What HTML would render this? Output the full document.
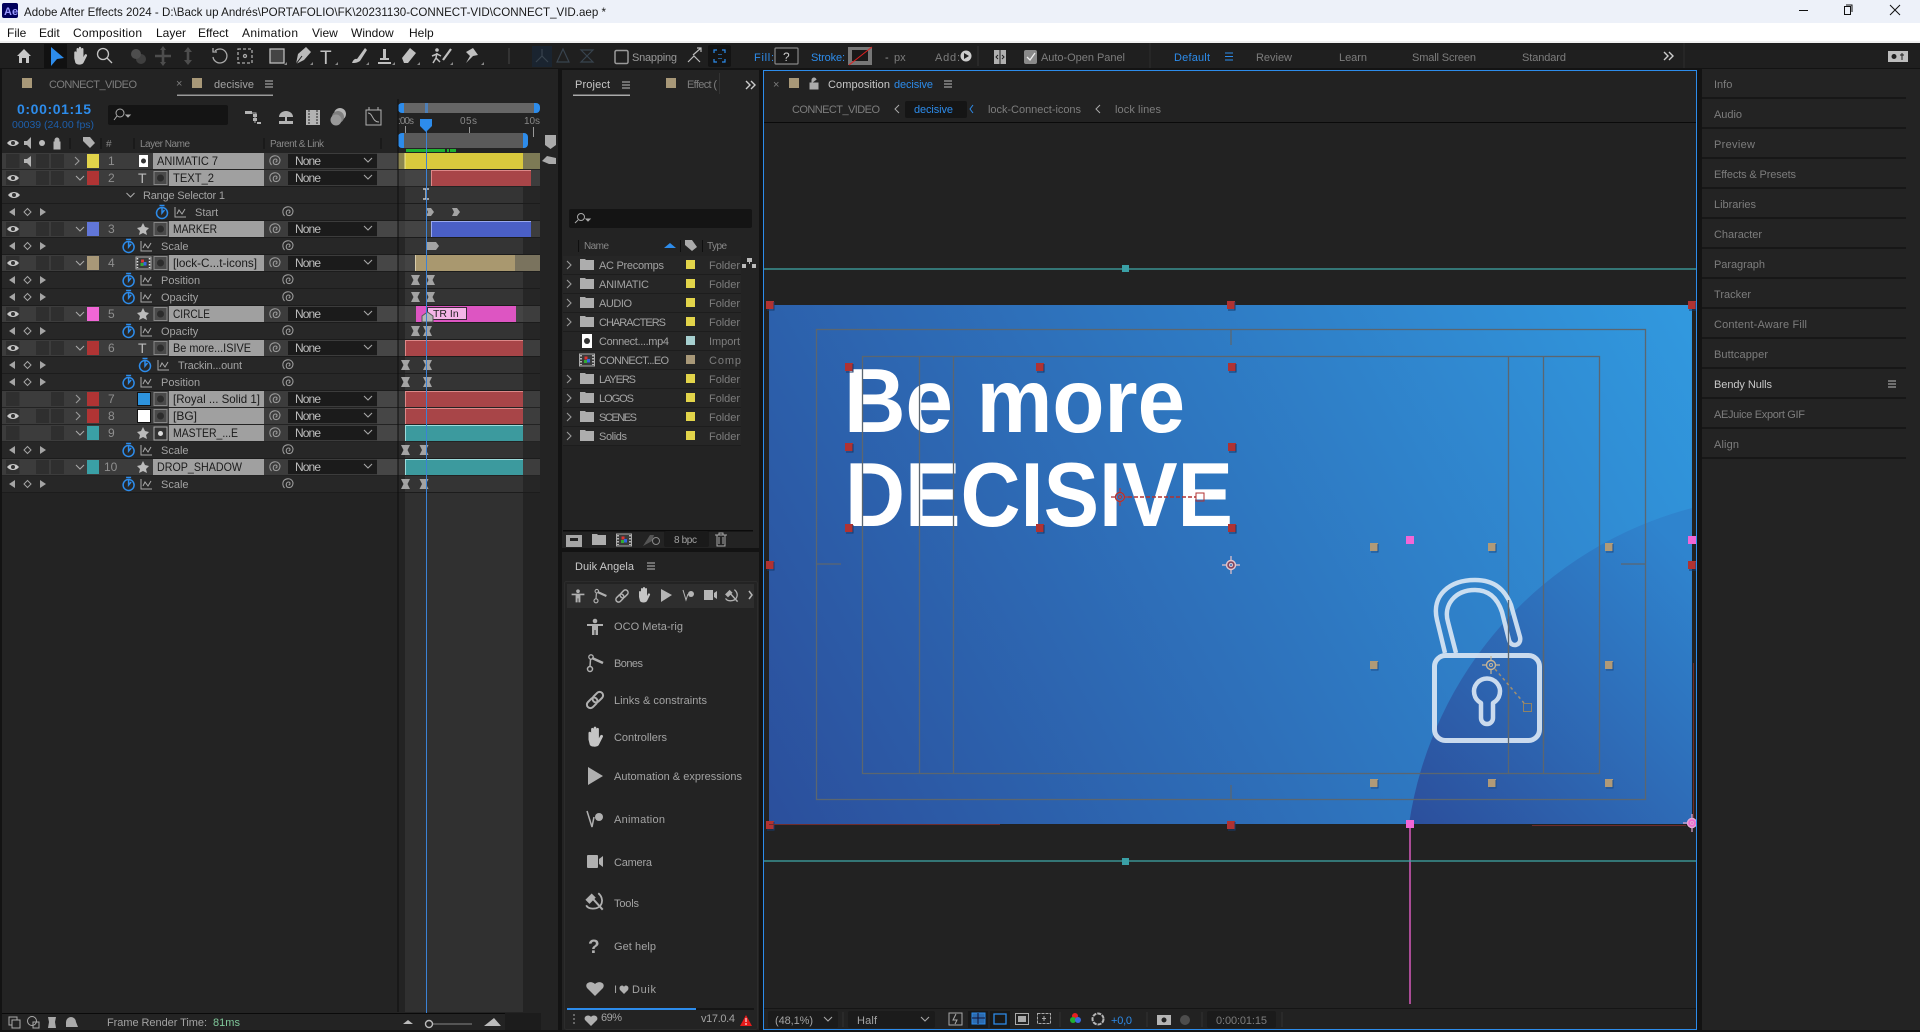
<!DOCTYPE html>
<html lang="en"><head><meta charset="utf-8"><title>Adobe After Effects 2024</title>
<style>
html,body{margin:0;padding:0;background:#131313;overflow:hidden;width:1920px;height:1032px}
svg{display:block}
text{font-family:"Liberation Sans",sans-serif;font-size:11px;fill:#999;white-space:pre}
.d{fill:#7d7d7d}.b{fill:#2d8ceb}.l{fill:#c8c8c8}.n{fill:#1b1b1b;font-size:12px}.w{fill:#bdbdbd;font-size:12px}
.m{fill:#1a1a1a;font-size:12px}.s{fill:#8f8f8f;font-size:12px}.h{font-size:10px;fill:#888}.p{fill:#a3a3a3;font-size:11px}
</style></head><body>
<svg xmlns="http://www.w3.org/2000/svg" width="1920" height="1032" viewBox="0 0 1920 1032">
<defs>
<linearGradient id="bg" gradientUnits="userSpaceOnUse" x1="769" y1="824" x2="1692" y2="305"><stop offset="0" stop-color="#2b4f9c"/><stop offset="1" stop-color="#3199df"/></linearGradient>
<linearGradient id="cg" gradientUnits="userSpaceOnUse" x1="1410" y1="824" x2="1692" y2="560"><stop offset="0" stop-color="#2c4f9c"/><stop offset="1" stop-color="#2f84ce"/></linearGradient>
<g id="eye"><path d="M-6 0C-3-4 3-4 6 0C3 4-3 4-6 0Z" fill="#c8c8c8"/><circle r="2" fill="#333"/></g>
<path id="pw" d="M0 1C2 1 2-2 0-2C-3-2-3 3 0 3.500C4 4 6-1 3-4C1-6-3-5.500-5-3M-5-3C-6-1-6 2-4 4" fill="none" stroke="#9a9a9a" stroke-width="1.100"/>
<g id="sw" fill="none" stroke="#2d8ceb" stroke-width="1.500"><circle cy="1" r="5.500"/><path d="M-2.500-6.500H2.500M0-4.500V1L2.500-2"/></g>
<path id="gr" d="M0-5V5H11M2 2L4-2L7 2L10-3" fill="none" stroke="#a8a8a8" stroke-width="1"/>
<g id="nav" fill="#a5a5a5"><path d="M15-4V4L9 0Z"/><path d="M27.500-3.500L31 0L27.500 3.500L24 0Z" fill="none" stroke="#a5a5a5"/><path d="M40-4L46 0L40 4Z"/></g>
<path id="kf" d="M-4.500-5H4.500L2 0L4.500 5H-4.500L-2 0Z" fill="#a3a3a3"/>
<g id="sq"><rect x="-6.500" y="-6.500" width="13" height="13" fill="#4a4a4a" stroke="#888"/><circle r="3.500" fill="#2c2c2c"/></g>
<g id="cmp"><rect x="-7.500" y="-6" width="15" height="12" fill="#3a3a3a" stroke="#aaa"/><path d="M-6-5V5M6-5V5" stroke="#ddd" stroke-dasharray="1.500 1.500" stroke-width="1.500"/><rect x="-2.500" y="-3.500" width="3" height="3" fill="#d33"/><rect x="-3" y="0" width="3" height="3" fill="#3a3"/><rect x="0" y="-1" width="3" height="3.500" fill="#36d"/></g>
<path id="cd" d="M-4-2L0 2L4-2" fill="none" stroke="#a8a8a8" stroke-width="1.100"/>
<path id="cr" d="M-2-4L2 0L-2 4" fill="none" stroke="#9a9a9a" stroke-width="1.100"/>
<path id="bu" d="M-4-3H4M-4 0H4M-4 3H4" stroke="#bdbdbd" stroke-width="1"/>
<path id="fo" d="M-7-5H-2L-1-4H7V6H-7Z" fill="#adadad"/>
<path id="ha" d="M-5 2V-3a1 1 0 0 1 2 0V-1V-6a1 1 0 0 1 2 0V-1V-7a1 1 0 0 1 2 0V-1V-6a1 1 0 0 1 2 0V1L4-1a1 1 0 0 1 2 1L3 6C2 8-3 8-4 6Z" fill="#c4c4c4"/>
<g id="oco" fill="#b0b0b0"><circle cy="-6" r="2.300"/><path d="M-8-3H8V-1H3V8H.5V3H-.5V8H-3V-1H-8Z"/></g>
<g id="bone" fill="none" stroke="#b0b0b0"><circle cx="-5" cy="6" r="2.500" stroke-width="1.500"/><circle cx="-4" cy="-6" r="2.200" stroke-width="1.300"/><path d="M-3-5L8 0" stroke-width="2.600"/><path d="M-4.500-3.500L-5 3.500" stroke-width="1.500"/></g>
<g id="lk" fill="none" stroke="#b0b0b0" stroke-width="2" transform="rotate(-45)"><rect x="-10" y="-3.500" width="12" height="7" rx="3.500"/><rect x="-2" y="-3.500" width="12" height="7" rx="3.500"/></g>
<g id="tl" fill="none" stroke="#b0b0b0"><path d="M-8-2L-3-7L0-4L-5 1Z" fill="#b0b0b0"/><path d="M-2-3L7 7" stroke-width="1.800"/><path d="M3-8C9-3 7 6-2 6C-5 6-7 5-8 3" stroke-width="1.600"/></g>
<g id="L"><rect x="2" width="396" height="16" fill="#3c3c3c"/><rect x="6" y="1" width="13.500" height="14" fill="#2f2f2f"/><rect x="36" y="1" width="13" height="14" fill="#2f2f2f"/><rect x="51" y="1" width="13" height="14" fill="#2f2f2f"/><rect x="377" width="21" height="16" fill="#464646"/><rect x="169" width="95" height="16" fill="#a0a0a0"/><use href="#pw" x="275.500" y="8"/><rect x="288" y="1" width="89" height="14" fill="#1b1b1b"/><text x="295" y="12" class="w" textLength="26">None</text><use href="#cd" x="368" y="7"/><rect x="398" width="142" height="16" fill="#3d3d3d"/><rect x="405" width="118" height="16" fill="#444"/></g>
<g id="S0"><rect x="2" width="396" height="16" fill="#272727"/><rect x="398" width="142" height="16" fill="#262626"/><rect x="405" width="118" height="16" fill="#343434"/></g>
<g id="S"><use href="#S0"/><use href="#pw" x="288.500" y="8"/></g>
<g id="h8"><rect x="-4" y="-4" width="8" height="8" fill="#b03232"/><path d="M4-3V5H-3" fill="none" stroke="#173a6c" stroke-width="1"/></g>
<g id="ht"><rect x="-4" y="-4" width="8" height="8" fill="#b09a78"/><path d="M4-3V5H-3" fill="none" stroke="#1d4f8c" stroke-width="1"/></g>
<g id="hp"><rect x="-4" y="-4" width="8" height="8" fill="#f266d6"/></g>
<g id="ap" fill="none"><circle r="4.500" stroke-width="1.400"/><circle r="1.500" stroke-width="1"/><path d="M-9 0H-4.500M4.500 0H9M0-9V-4.500M0 4.500V9" stroke-width="1.200"/></g>
</defs>

<!-- window chrome -->
<rect width="1920" height="23" fill="#edf1f9"/>
<rect y="23" width="1920" height="18" fill="#fff"/>
<rect y="41" width="1920" height="2" fill="#f0f0f0"/>
<rect x="2" y="3" width="16" height="15" rx="2" fill="#00005b"/>
<text x="4" y="15" style="font-size:11px;font-weight:bold;fill:#9999ff">Ae</text>
<text x="24" y="16" style="font-size:12px;fill:#1a1a1a" textLength="582" lengthAdjust="spacingAndGlyphs">Adobe After Effects 2024 - D:\Back up Andrés\PORTAFOLIO\FK\20231130-CONNECT-VID\CONNECT_VID.aep *</text>
<text x="7" y="37" style="font-size:12px;fill:#111">File</text><text x="39" y="37" style="font-size:12px;fill:#111">Edit</text><text x="73" y="37" style="font-size:12px;fill:#111" textLength="69">Composition</text><text x="156" y="37" style="font-size:12px;fill:#111">Layer</text><text x="198" y="37" style="font-size:12px;fill:#111">Effect</text><text x="242" y="37" style="font-size:12px;fill:#111" textLength="56">Animation</text><text x="312" y="37" style="font-size:12px;fill:#111">View</text><text x="351" y="37" style="font-size:12px;fill:#111">Window</text><text x="409" y="37" style="font-size:12px;fill:#111">Help</text>
<path d="M1799 10.500H1808" stroke="#111"/><rect x="1844.500" y="6.500" width="6" height="8" fill="none" stroke="#111"/><path d="M1846 5H1852V12" fill="none" stroke="#111"/><path d="M1890 5L1900 15M1900 5L1890 15" stroke="#111"/>

<!-- toolbar -->
<rect y="43" width="1920" height="25" fill="#1f1f1f"/>
<path d="M17 56L24 49L31 56H29V63H26V58H22V63H19V56Z" fill="#c8c8c8"/>
<rect x="44" y="44" width="23" height="24" fill="#111"/>
<path d="M51 47L64 58L57 59L51 66Z" fill="#2d8ceb"/>
<use href="#ha" transform="translate(80,56) scale(1.150)"/>
<g fill="none" stroke="#c4c4c4" stroke-width="1.300"><circle cx="103" cy="54" r="5.500"/><path d="M107 58L112 63"/></g>
<g fill="#4d4d4d"><circle cx="136" cy="54" r="5"/><circle cx="141" cy="59" r="5" opacity=".7"/></g>
<path d="M163 48V64M155 56H171" stroke="#4d4d4d" stroke-width="2.600"/><path d="M163 46L166 50H160ZM163 66L166 62H160Z" fill="#4d4d4d"/>
<path d="M188 50V62" stroke="#4d4d4d" stroke-width="2.600"/><path d="M188 47L192 52H184ZM188 65L192 60H184Z" fill="#4d4d4d"/>
<g fill="none" stroke="#aaa" stroke-width="1.300"><path d="M215 51A7 7 0 1 1 213 57"/><path d="M213 48V52H217"/><rect x="238" y="49" width="14" height="14" stroke-dasharray="3 2"/><circle cx="245" cy="56" r="1.500"/><rect x="270" y="49" width="14" height="14" fill="#444" stroke="#bbb"/></g>
<path d="M296 64L298 54L306 47L311 52L304 60Z" fill="#bbb"/><path d="M296 64L302 56" stroke="#1f1f1f"/>
<text x="320" y="64" style="font-size:19px;fill:#c0c0c0">T</text>
<path d="M352 63C354 58 356 59 357 59L365 48L367 50L360 61C357 63 355 63 352 63Z" fill="#c0c0c0"/>
<path d="M378 62H391V64H378ZM380 58H389V60H380ZM383 49H386V58H383Z" fill="#c0c0c0"/>
<path d="M402 58L410 48L416 53L408 63H404Z" fill="#c0c0c0"/>
<circle cx="437" cy="50" r="1.800" fill="#c0c0c0"/><path d="M437 53L436 58L433 63M436 58L440 62M432 56L437 54L441 56" fill="none" stroke="#c0c0c0" stroke-width="1.500"/><path d="M443 60L451 49" stroke="#c0c0c0" stroke-width="2.200"/>
<path d="M466 63L470 56L466 52L473 48L478 55L473 56Z" fill="#c0c0c0"/>
<path d="M284 65L287 62V65ZM310 65L313 62V65ZM335 65L338 62V65ZM366 65L369 62V65ZM392 65L395 62V65ZM417 65L420 62V65ZM450 65L453 62V65ZM481 65L484 62V65Z" fill="#888"/>
<rect x="532" y="46" width="20" height="21" fill="#1a2430"/>
<g fill="none" stroke="#38434e" stroke-width="1.200"><path d="M542 49V56L536 62M542 56L548 62"/><path d="M563 49L557 62H569Z"/><path d="M581 50H593L581 62H593Z"/></g>
<path d="M509 48V64" stroke="#333" stroke-width="2"/>
<rect x="615" y="50.500" width="13" height="13" rx="1.500" fill="none" stroke="#9a9a9a" stroke-width="1.500"/>
<text x="632" y="61" textLength="45">Snapping</text>
<path d="M688 62L694 56L700 62M693 55L701 48M697 48H701V52" fill="none" stroke="#bbb" stroke-width="1.200"/>
<rect x="708" y="45" width="23" height="22" rx="2" fill="#131313"/>
<g fill="none" stroke="#2d8ceb" stroke-width="1.200"><path d="M714 53V50H717M722 50H725V53M725 59V62H722M717 62H714V59"/><path d="M719 54V55M721 54V55M719 58V59M721 58V59"/></g>
<text x="754" y="61" class="b" textLength="20">Fill:</text>
<rect x="775" y="48" width="23" height="16" rx="1" fill="#1a1a1a" stroke="#888" stroke-width="1.200"/>
<text x="783" y="61" style="font-size:12px;fill:#ccc">?</text>
<text x="811" y="61" class="b" textLength="34">Stroke:</text>
<rect x="848" y="47" width="24" height="18" fill="#777"/><rect x="852" y="50" width="16" height="11" fill="#191919"/><path d="M849 65L872 47" stroke="#e02020"/>
<text x="885" y="61">-</text><text x="894" y="61" class="d">px</text>
<text x="935" y="61" class="d" textLength="25">Add:</text>
<circle cx="966" cy="56" r="5.500" fill="#ccc"/><path d="M964 53V59L969 56Z" fill="#1f1f1f"/>
<path d="M978 46V66" stroke="#333"/>
<rect x="994" y="50" width="12" height="14" fill="#b0b0b0"/><path d="M1000 50V64M998 55L996 57L998 59M1002 55L1004 57L1002 59" stroke="#1f1f1f" fill="none"/>
<rect x="1024" y="50" width="13" height="14" rx="2" fill="#8a8a8a"/><path d="M1027 57L1030 60L1035 53" fill="none" stroke="#eee" stroke-width="1.300"/>
<text x="1041" y="61" class="d" textLength="84">Auto-Open Panel</text>
<path d="M1150 43V68" stroke="#2c2c2c"/>
<text x="1174" y="61" class="b" textLength="36">Default</text>
<path d="M1225 53H1233M1225 56.500H1233M1225 60H1233" stroke="#2d8ceb"/>
<text x="1256" y="61" class="d" textLength="36">Review</text><text x="1339" y="61" class="d" textLength="28">Learn</text><text x="1412" y="61" class="d" textLength="64">Small Screen</text><text x="1522" y="61" class="d" textLength="44">Standard</text>
<path d="M1664 52L1668 56L1664 60M1669 52L1673 56L1669 60" fill="none" stroke="#ccc" stroke-width="1.400"/>
<path d="M1684 43V68" stroke="#2c2c2c"/>
<rect x="1888" y="51" width="20" height="11" fill="#bdbdbd"/><circle cx="1894" cy="56.500" r="2.500" fill="#1f1f1f"/><path d="M1902 53V60M1900 55H1904" stroke="#1f1f1f"/>

<!-- timeline panel -->
<rect x="2" y="69" width="556" height="961" fill="#232323"/>
<rect x="22" y="78" width="10" height="10" fill="#a89878"/>
<text x="49" y="88" class="d" textLength="88">CONNECT_VIDEO</text>
<text x="176" y="87" class="d">×</text>
<rect x="192" y="78" width="10" height="10" fill="#a89878"/>
<text x="214" y="88" class="p" textLength="40">decisive</text><use href="#bu" x="269" y="84"/>
<rect x="177" y="94.500" width="96" height="1.500" fill="#9a9a9a"/>
<text x="17" y="114" style="font-size:14px;font-weight:bold;fill:#2d8ceb" textLength="74">0:00:01:15</text>
<text x="12" y="128" style="font-size:10.500px;fill:#1e5fab" textLength="82">00039 (24.00 fps)</text>
<rect x="108" y="105" width="120" height="20" rx="2" fill="#141414"/>
<circle cx="120" cy="113" r="4" fill="none" stroke="#aaa"/><path d="M117 116L114 120M126 115H130L128 117Z" stroke="#aaa" fill="#aaa"/>
<g fill="#b3b3b3"><path d="M245 111H252V114H245ZM253 114H257V117H253ZM253 118H257V121H253ZM257 122H261V124H257Z"/><path d="M249 113H256V117M255 117V123" fill="none" stroke="#b3b3b3"/><path d="M279 117A7 6 0 0 1 293 117ZM285 117H287V121H285ZM279 121H293V124H279Z"/><path d="M306 110H320V125H306Z"/><circle cx="340" cy="114" r="6"/><circle cx="338" cy="117" r="6" fill="#808080"/><circle cx="336" cy="120" r="5.500" fill="#999"/></g>
<path d="M309 110V125M317 110V125" stroke="#232323" stroke-dasharray="2 1"/>
<rect x="366" y="110" width="15" height="15" fill="none" stroke="#b3b3b3"/><path d="M368 113C373 113 372 122 379 122M369 107V110M378 107V110" fill="none" stroke="#b3b3b3"/>

<!-- column header -->
<use href="#eye" x="13" y="143"/><path d="M24 141H27L31 137V149L27 145H24Z" fill="#b0b0b0"/><circle cx="42" cy="143" r="3" fill="#bbb"/><path d="M54 142H60V149H54ZM55 142V140A2 2 0 0 1 59 140V142" fill="#b5b5b5" stroke="#b5b5b5"/>
<path d="M70 138V149M101 138V149M134 138V149M264 138V149M381 138V149" stroke="#111"/>
<path d="M83 137H90L95 143L90 148L83 141Z" fill="#b0b0b0"/>
<text x="106" y="147" class="h">#</text><text x="140" y="147" class="h" textLength="50">Layer Name</text><text x="270" y="147" class="h" textLength="54">Parent &amp; Link</text>

<!-- layers -->
<use href="#L" y="153"/><rect x="153" y="153" width="18" height="16" fill="#a0a0a0"/><path d="M24 159H27L31 156V167L27 163H24Z" fill="#b5b5b5"/><use href="#cr" x="77" y="161"/><rect x="87" y="154" width="12" height="14" fill="#e2d44a"/><text x="108" y="165" class="s">1</text><rect x="139" y="155" width="9" height="12" fill="#fff"/><circle cx="143.500" cy="161" r="2.500" fill="#333"/><text x="157" y="165" class="m" textLength="61" lengthAdjust="spacingAndGlyphs">ANIMATIC 7</text>
<use href="#L" y="170"/><use href="#eye" x="13" y="178"/><use href="#cd" x="80" y="178"/><rect x="87" y="171" width="12" height="14" fill="#b03434"/><text x="108" y="182" class="s">2</text><text x="138" y="183" style="font-size:14px;fill:#bbb">T</text><use href="#sq" x="160.500" y="178"/><text x="173" y="182" class="m" textLength="41" lengthAdjust="spacingAndGlyphs">TEXT_2</text>
<use href="#S0" y="187"/><use href="#eye" x="14" y="195"/><use href="#cd" x="130.500" y="195"/><text x="143" y="199" class="p" textLength="82">Range Selector 1</text>
<use href="#S" y="204"/><use href="#nav" y="212"/><use href="#sw" x="162" y="212"/><use href="#gr" x="175" y="212"/><text x="195" y="216" class="p">Start</text>
<use href="#L" y="221"/><use href="#eye" x="13" y="229"/><use href="#cd" x="80" y="229"/><rect x="87" y="222" width="12" height="14" fill="#6176d8"/><text x="108" y="233" class="s">3</text><path d="M143 223L145 227L149 228L146 231L147 235L143 233L139 235L140 231L137 228L141 227Z" fill="#bbb"/><use href="#sq" x="160.500" y="229"/><text x="173" y="233" class="m" textLength="44" lengthAdjust="spacingAndGlyphs">MARKER</text>
<use href="#S" y="238"/><use href="#nav" y="246"/><use href="#sw" x="128.600" y="246"/><use href="#gr" x="141" y="246"/><text x="161" y="250" class="p">Scale</text>
<use href="#L" y="255"/><use href="#eye" x="13" y="263"/><use href="#cd" x="80" y="263"/><rect x="87" y="256" width="12" height="14" fill="#a89878"/><text x="108" y="267" class="s">4</text><use href="#cmp" x="143.500" y="263"/><use href="#sq" x="160.500" y="263"/><text x="173" y="267" class="m" textLength="84" lengthAdjust="spacingAndGlyphs">[lock-C...t-icons]</text>
<use href="#S" y="272"/><use href="#nav" y="280"/><use href="#sw" x="128.600" y="280"/><use href="#gr" x="141" y="280"/><text x="161" y="284" class="p">Position</text>
<use href="#S" y="289"/><use href="#nav" y="297"/><use href="#sw" x="128.600" y="297"/><use href="#gr" x="141" y="297"/><text x="161" y="301" class="p">Opacity</text>
<use href="#L" y="306"/><use href="#eye" x="13" y="314"/><use href="#cd" x="80" y="314"/><rect x="87" y="307" width="12" height="14" fill="#f266d6"/><text x="108" y="318" class="s">5</text><path d="M143 308L145 312L149 313L146 316L147 320L143 318L139 320L140 316L137 313L141 312Z" fill="#bbb"/><use href="#sq" x="160.500" y="314"/><text x="173" y="318" class="m" textLength="37" lengthAdjust="spacingAndGlyphs">CIRCLE</text>
<use href="#S" y="323"/><use href="#nav" y="331"/><use href="#sw" x="128.600" y="331"/><use href="#gr" x="141" y="331"/><text x="161" y="335" class="p">Opacity</text>
<use href="#L" y="340"/><use href="#eye" x="13" y="348"/><use href="#cd" x="80" y="348"/><rect x="87" y="341" width="12" height="14" fill="#b03434"/><text x="108" y="352" class="s">6</text><text x="138" y="353" style="font-size:14px;fill:#bbb">T</text><use href="#sq" x="160.500" y="348"/><text x="173" y="352" class="m" textLength="78" lengthAdjust="spacingAndGlyphs">Be more...ISIVE</text>
<use href="#S" y="357"/><use href="#nav" y="365"/><use href="#sw" x="145" y="365"/><use href="#gr" x="158" y="365"/><text x="178" y="369" class="p" textLength="64">Trackin...ount</text>
<use href="#S" y="374"/><use href="#nav" y="382"/><use href="#sw" x="128.600" y="382"/><use href="#gr" x="141" y="382"/><text x="161" y="386" class="p">Position</text>
<use href="#L" y="391"/><rect x="36" y="392" width="13" height="14" fill="#3c3c3c"/><use href="#cr" x="78" y="399"/><rect x="87" y="392" width="12" height="14" fill="#b03434"/><text x="108" y="403" class="s">7</text><rect x="137.500" y="392.500" width="13" height="13" fill="#2d93dd" stroke="#111"/><use href="#sq" x="160.500" y="399"/><text x="173" y="403" class="m" textLength="87" lengthAdjust="spacingAndGlyphs">[Royal ... Solid 1]</text>
<use href="#L" y="408"/><use href="#eye" x="13" y="416"/><use href="#cr" x="78" y="416"/><rect x="87" y="409" width="12" height="14" fill="#b03434"/><text x="108" y="420" class="s">8</text><rect x="137.500" y="409.500" width="13" height="13" fill="#fff" stroke="#111"/><use href="#sq" x="160.500" y="416"/><text x="173" y="420" class="m">[BG]</text>
<use href="#L" y="425"/><rect x="36" y="426" width="13" height="14" fill="#3c3c3c"/><use href="#cd" x="80" y="433"/><rect x="87" y="426" width="12" height="14" fill="#3aa0a6"/><text x="108" y="437" class="s">9</text><path d="M143 427L145 431L149 432L146 435L147 439L143 437L139 439L140 435L137 432L141 431Z" fill="#bbb"/><rect x="154" y="427" width="13" height="13" fill="#333" stroke="#aaa"/><circle cx="160.500" cy="433.500" r="2.500" fill="#ddd"/><text x="173" y="437" class="m" textLength="65" lengthAdjust="spacingAndGlyphs">MASTER_...E</text>
<use href="#S" y="442"/><use href="#nav" y="450"/><use href="#sw" x="128.600" y="450"/><use href="#gr" x="141" y="450"/><text x="161" y="454" class="p">Scale</text>
<use href="#L" y="459"/><rect x="153" y="459" width="20" height="16" fill="#a0a0a0"/><use href="#eye" x="13" y="467"/><use href="#cd" x="80" y="467"/><rect x="87" y="460" width="12" height="14" fill="#3aa0a6"/><text x="104" y="471" class="s">10</text><path d="M143 461L145 465L149 466L146 469L147 473L143 471L139 473L140 469L137 466L141 465Z" fill="#bbb"/><text x="157" y="471" class="m" textLength="85" lengthAdjust="spacingAndGlyphs">DROP_SHADOW</text>
<use href="#S" y="476"/><use href="#nav" y="484"/><use href="#sw" x="128.600" y="484"/><use href="#gr" x="141" y="484"/><text x="161" y="488" class="p">Scale</text>
<path d="M2 186.500H398M2 203.500H540M2 220.500H540M2 254.500H540M2 288.500H540M2 305.500H540M2 339.500H540M2 373.500H540M2 390.500H540M2 458.500H540M2 492.500H540M2 237.500H540M2 271.500H540M2 322.500H540M2 356.500H540" stroke="#1c1c1c"/>

<!-- timeline bars -->
<rect x="405" y="493" width="118" height="519" fill="#303030"/>
<rect x="398" y="153" width="7" height="16" fill="#8a8450"/><rect x="405" y="153" width="118" height="16" fill="#d9c93d"/><rect x="523" y="153" width="17" height="16" fill="#7d7a55"/><path d="M405 153V169" stroke="#f2e990"/>
<rect x="431" y="170" width="100" height="16" fill="#a84548"/><path d="M431.500 170V186M431 170.500H531" stroke="#d88"/>
<rect x="431" y="221" width="100" height="16" fill="#4a5fc6"/><path d="M431.500 221V237M431 221.500H531" stroke="#99a8ee"/>
<rect x="415" y="255" width="100" height="16" fill="#a9986f"/><rect x="515" y="255" width="25" height="16" fill="#7a735e"/><path d="M415.500 255V271" stroke="#d8cbaa"/>
<rect x="416" y="306" width="100" height="16" fill="#dd55c2"/>
<rect x="405" y="340" width="118" height="16" fill="#a84548"/><rect x="405" y="391" width="118" height="16" fill="#a84548"/><rect x="405" y="408" width="118" height="16" fill="#a84548"/>
<rect x="405" y="425" width="118" height="16" fill="#3c9a9e"/><rect x="405" y="459" width="118" height="16" fill="#3c9a9e"/>
<path d="M405.500 340V356M405 340.500H523M405.500 391V407M405 391.500H523M405.500 408V424M405 408.500H523" stroke="#d88"/>
<path d="M405.500 425V441M405 425.500H523M405.500 459V475M405 459.500H523" stroke="#9ddcdc"/>
<rect x="427.500" y="307.500" width="39" height="12" fill="#f5b5e8" stroke="#3a2a38"/><text x="433" y="317" style="font-size:10.500px;fill:#222">TR In</text>
<path d="M422 322V316L427.500 312L433 316V322Z" fill="#b5b5b5" stroke="#555"/>
<path d="M423 189H429M426 189V199M423 199H429" stroke="#c8c8c8" stroke-width="1.400"/>
<path d="M426 208H431L434 212L431 216H426L428 212Z M452 208H457L460 212L457 216H452L454 212Z" fill="#a3a3a3"/>
<path d="M426 242H436L439 246L436 250H426Z" fill="#a3a3a3"/>
<use href="#kf" x="415.500" y="280"/><use href="#kf" x="430.500" y="280"/><use href="#kf" x="415.500" y="297"/><use href="#kf" x="430.500" y="297"/>
<use href="#kf" x="415.500" y="331"/><use href="#kf" x="427.500" y="331"/><use href="#kf" x="405.500" y="365"/><use href="#kf" x="427.500" y="365"/><use href="#kf" x="405.500" y="382"/><use href="#kf" x="427.500" y="382"/><use href="#kf" x="405.500" y="450"/><use href="#kf" x="424" y="450"/><use href="#kf" x="405.500" y="484"/><use href="#kf" x="424" y="484"/>
<rect x="398" y="103" width="142" height="10" rx="4" fill="#2d8ceb"/><rect x="404" y="103" width="130" height="10" fill="#666"/><rect x="425" y="103" width="3" height="10" fill="#4f7fb5"/>
<text x="398" y="124" class="h" textLength="16">:00s</text><text x="460" y="124" class="h" textLength="17">05s</text><text x="524" y="124" class="h" textLength="16">10s</text>
<path d="M405.500 126V133M469.500 127V133M533.500 127V137" stroke="#999"/>
<rect x="398" y="133" width="130" height="15" rx="4" fill="#2d8ceb"/><rect x="404" y="133" width="119" height="15" fill="#5a5a5a"/>
<rect x="406" y="149" width="39" height="3" fill="#1fb030"/><rect x="447" y="149" width="2" height="3" fill="#1fb030"/><rect x="450" y="149" width="6" height="3" fill="#1fb030"/>
<path d="M545 135H556V145L550.500 149L545 145Z" fill="#aaa"/>
<path d="M542 161L547 156L556 158V164H549Z" fill="#aaa"/>
<path d="M398 99V1012" stroke="#0d0d0d" stroke-width="1"/>
<path d="M420 119H432V126L426 132L420 126Z" fill="#2d8ceb"/>
<path d="M426.500 131V1013" stroke="#3b82d6"/>
<!-- timeline footer -->
<rect x="2" y="1013" width="503" height="1" fill="#0a0a0a"/><rect x="505" y="1013" width="36" height="17" fill="#1c1c1c"/>
<g fill="none" stroke="#aaa"><rect x="9" y="1017" width="8" height="8"/><rect x="12" y="1020" width="8" height="8" fill="#232323"/><circle cx="32" cy="1021" r="4.500"/><rect x="33" y="1022" width="6" height="6"/></g>
<path d="M48 1017H56L55 1022L56 1028H48L49 1022Z" fill="#aaa"/><path d="M66 1022A5 5 0 0 1 76 1022L78 1027H66Z" fill="#aaa"/>
<text x="107" y="1026" class="p" textLength="100">Frame Render Time:</text><text x="213" y="1026" style="fill:#7fc89a" textLength="27">81ms</text>
<path d="M403 1024L408 1020L413 1024Z M484 1026L494 1018L501 1026Z" fill="#bbb"/><path d="M429 1024H472" stroke="#555" stroke-width="2"/><circle cx="429" cy="1024" r="3.500" fill="#232323" stroke="#bbb" stroke-width="1.400"/>

<!-- project panel -->
<rect x="562" y="70" width="197" height="478" fill="#232323"/>
<text x="575" y="88" class="l" textLength="35">Project</text><use href="#bu" x="626" y="85"/><rect x="573" y="94.500" width="57" height="1.500" fill="#aaa"/>
<rect x="666" y="78" width="10" height="10" fill="#a89878"/><text x="687" y="88" class="d" textLength="30">Effect (</text><path d="M719.500 73V94" stroke="#333"/>
<path d="M746 81L750 85L746 89M751 81L755 85L751 89" fill="none" stroke="#ccc" stroke-width="1.400"/>
<rect x="569" y="209" width="183" height="19" rx="2" fill="#141414"/>
<circle cx="581" cy="217" r="3.500" fill="none" stroke="#aaa"/><path d="M578 220L575 223M586 219H590L588 221Z" stroke="#aaa" fill="#aaa"/>
<path d="M578.500 240V252M680.500 240V252M702.500 240V252" stroke="#0f0f0f"/>
<text x="584" y="249" class="h" textLength="25">Name</text><path d="M664 248L670 243L676 248Z" fill="#2d8ceb"/><path d="M685 240H692L697 247L692 251L685 245Z" fill="#aaa"/><text x="707" y="249" class="h" textLength="20">Type</text>
<rect x="563" y="256" width="178" height="190" fill="#262626"/>
<path d="M563 274.500H741M563 293.500H741M563 312.500H741M563 331.500H741M563 350.500H741M563 369.500H741M563 388.500H741M563 407.500H741M563 426.500H741M563 445.500H741" stroke="#1d1d1d"/>
<use href="#cr" x="569" y="265"/><use href="#fo" x="587" y="264"/><text x="599" y="269" class="p" textLength="65">AC Precomps</text><rect x="686" y="260" width="9" height="9" fill="#e2d44a"/><text x="709" y="269" class="d" textLength="31">Folder</text>
<use href="#cr" x="569" y="284"/><use href="#fo" x="587" y="283"/><text x="599" y="288" class="p" textLength="50">ANIMATIC</text><rect x="686" y="279" width="9" height="9" fill="#e2d44a"/><text x="709" y="288" class="d" textLength="31">Folder</text>
<use href="#cr" x="569" y="303"/><use href="#fo" x="587" y="302"/><text x="599" y="307" class="p" textLength="33">AUDIO</text><rect x="686" y="298" width="9" height="9" fill="#e2d44a"/><text x="709" y="307" class="d" textLength="31">Folder</text>
<use href="#cr" x="569" y="322"/><use href="#fo" x="587" y="321"/><text x="599" y="326" class="p" textLength="67">CHARACTERS</text><rect x="686" y="317" width="9" height="9" fill="#e2d44a"/><text x="709" y="326" class="d" textLength="31">Folder</text>
<rect x="582" y="334" width="10" height="14" fill="#fff"/><circle cx="587" cy="341" r="3" fill="#333"/><text x="599" y="345" class="p" textLength="70">Connect....mp4</text><rect x="686" y="336" width="9" height="9" fill="#a6cfcf"/><text x="709" y="345" class="d" textLength="31">Import</text>
<use href="#cmp" x="587" y="360"/><text x="599" y="364" class="p" textLength="70">CONNECT...EO</text><rect x="686" y="355" width="9" height="9" fill="#a89878"/><text x="709" y="364" class="d" textLength="32">Comp</text>
<use href="#cr" x="569" y="379"/><use href="#fo" x="587" y="378"/><text x="599" y="383" class="p" textLength="37">LAYERS</text><rect x="686" y="374" width="9" height="9" fill="#e2d44a"/><text x="709" y="383" class="d" textLength="31">Folder</text>
<use href="#cr" x="569" y="398"/><use href="#fo" x="587" y="397"/><text x="599" y="402" class="p" textLength="35">LOGOS</text><rect x="686" y="393" width="9" height="9" fill="#e2d44a"/><text x="709" y="402" class="d" textLength="31">Folder</text>
<use href="#cr" x="569" y="417"/><use href="#fo" x="587" y="416"/><text x="599" y="421" class="p" textLength="38">SCENES</text><rect x="686" y="412" width="9" height="9" fill="#e2d44a"/><text x="709" y="421" class="d" textLength="31">Folder</text>
<use href="#cr" x="569" y="436"/><use href="#fo" x="587" y="435"/><text x="599" y="440" class="p" textLength="28">Solids</text><rect x="686" y="431" width="9" height="9" fill="#e2d44a"/><text x="709" y="440" class="d" textLength="31">Folder</text>
<rect x="743" y="256" width="16" height="18" fill="#232323"/><path d="M747 258H752V262H750V264H756V268H752V264H746V268H742V264H749V262H747Z" fill="#bbb"/>
<rect x="563" y="530" width="190" height="1.500" fill="#0b0b0b"/>
<rect x="566" y="535" width="16" height="12" fill="#a5a5a5"/><rect x="570" y="538" width="8" height="3" fill="#232323"/><use href="#fo" x="599" y="539"/><use href="#cmp" x="624" y="540"/><path d="M643 546L650 535L654 535L652 541Z" fill="#555"/><circle cx="656" cy="541" r="3.500" fill="none" stroke="#888"/>
<rect x="664" y="531" width="45" height="16" rx="2" fill="#1a1a1a"/><text x="674" y="543" class="p" style="font-size:10px" textLength="23">8 bpc</text>
<path d="M715 535H727M717 535V546H725V535M719 537V544M723 537V544M719 535V533H723V535" fill="none" stroke="#aaa"/>

<!-- Duik panel -->
<rect x="562" y="552" width="197" height="478" fill="#232323"/>
<text x="575" y="570" class="l" textLength="59">Duik Angela</text><use href="#bu" x="651" y="566"/>
<rect x="564.500" y="581.500" width="193" height="448" rx="2" fill="#232323" stroke="#2c2c2c"/>
<rect x="567" y="584" width="187" height="24" fill="#2e2e2e"/>
<use href="#oco" transform="translate(578,596) scale(.8)"/><use href="#bone" transform="translate(600,596) scale(.8)"/><use href="#lk" transform="translate(622,596) scale(.75)"/><use href="#ha" x="644" y="595"/>
<path d="M661 589L672 595L661 602Z" fill="#b5b5b5"/><circle cx="691" cy="594" r="3" fill="#b5b5b5"/><path d="M683 590L686 600L688 594" fill="none" stroke="#b5b5b5"/><rect x="704" y="590" width="9" height="10" fill="#b5b5b5"/><path d="M714 593L717 591V599L714 597Z" fill="#b5b5b5"/><use href="#tl" transform="translate(732,596) scale(.8)"/><path d="M749 591L752 595L749 599" fill="none" stroke="#b5b5b5" stroke-width="1.500"/>
<use href="#oco" x="595" y="627"/><use href="#bone" x="595" y="663"/><use href="#lk" x="595" y="700"/>
<use href="#ha" transform="translate(595,737) scale(1.300)"/>
<path d="M588 767L603 776L588 785Z" fill="#b0b0b0"/>
<circle cx="599" cy="817" r="4" fill="#b0b0b0"/><path d="M587 811L592 827L594 817" fill="none" stroke="#b0b0b0" stroke-width="1.500"/>
<rect x="587" y="855" width="11" height="13" rx="1" fill="#b0b0b0"/><path d="M599 859L603 856V867L599 864Z" fill="#b0b0b0"/>
<use href="#tl" transform="translate(595,902) scale(1.100)"/>
<text x="588" y="953" style="font-size:19px;font-weight:bold;fill:#b0b0b0">?</text>
<path d="M595 996L587 988C584 983 591 980 595 984C599 980 606 983 603 988Z" fill="#b0b0b0"/>
<text x="614" y="630" class="p" textLength="69">OCO Meta-rig</text><text x="614" y="667" class="p" textLength="29">Bones</text><text x="614" y="704" class="p" textLength="93">Links &amp; constraints</text><text x="614" y="741" class="p" textLength="53">Controllers</text><text x="614" y="780" class="p" textLength="128">Automation &amp; expressions</text><text x="614" y="823" class="p" textLength="51">Animation</text><text x="614" y="866" class="p" textLength="38">Camera</text><text x="614" y="907" class="p" textLength="25">Tools</text><text x="614" y="950" class="p" textLength="42">Get help</text><text x="614" y="993" class="p">I</text><path d="M624 994L620 990C618 986 623 984 624 987C625 984 630 986 628 990Z" fill="#b0b0b0"/><text x="632" y="993" class="p" textLength="24">Duik</text>
<rect x="567" y="1008" width="187" height="2" fill="#151515"/><rect x="567" y="1008" width="129" height="2" fill="#2d8ceb"/>
<path d="M574 1014V1026" stroke="#666" stroke-width="2" stroke-dasharray="2 2"/>
<path d="M591 1026L585 1020C583 1016 589 1014 591 1017C593 1014 599 1016 597 1020Z" fill="#b0b0b0"/>
<text x="601" y="1021" class="p" textLength="21">69%</text><text x="701" y="1022" class="p" textLength="34">v17.0.4</text>
<path d="M746 1015L752 1026H740Z" fill="#e61a1a"/><path d="M746 1018V1022M746 1023V1025" stroke="#fff"/>

<!-- composition panel -->
<rect x="763.500" y="70.500" width="933" height="959" fill="#222" stroke="#2d8ceb"/>
<text x="773" y="88" class="d">×</text><rect x="789" y="78" width="10" height="10" fill="#a89878"/>
<path d="M810 83H818V89H810ZM812 83V80A2 2 0 0 1 816 80" fill="#aaa" stroke="#aaa"/>
<text x="828" y="88" class="l" textLength="62">Composition</text><text x="894" y="88" class="b" textLength="39">decisive</text><use href="#bu" x="948" y="84"/>
<text x="792" y="113" class="d" textLength="88">CONNECT_VIDEO</text><path d="M899 105L895 109L899 113" fill="none" stroke="#aaa"/>
<rect x="905" y="101" width="62" height="17" rx="2" fill="#151515"/><text x="914" y="113" class="b" textLength="39">decisive</text><path d="M973 105L970 109L973 113" fill="none" stroke="#2d8ceb"/>
<text x="988" y="113" class="d" textLength="93">lock-Connect-icons</text><path d="M1100 105L1096 109L1100 113" fill="none" stroke="#aaa"/><text x="1115" y="113" class="d" textLength="46">lock lines</text>
<path d="M764 122.500H1696" stroke="#0a0a0a"/>

<!-- canvas -->
<rect x="769" y="305" width="923" height="519" fill="url(#bg)"/>
<path d="M1409 824A385 385 0 0 1 1692 508V824Z" fill="url(#cg)"/>
<text x="844" y="432" style="font-size:91px;font-weight:bold;fill:#fff" textLength="341" lengthAdjust="spacingAndGlyphs">Be more</text>
<text x="845" y="526" style="font-size:91px;font-weight:bold;fill:#fff" textLength="388" lengthAdjust="spacingAndGlyphs">DECISIVE</text>
<g fill="none" stroke="#5b6670" stroke-width="1.300"><rect x="816.500" y="329.500" width="829" height="470"/><rect x="862.500" y="356.500" width="737" height="417"/><path d="M919.500 357V774M953.500 357V774M1508.500 357V774M1543.500 357V774M1231 329V345M1231 785V800M816 564H841M1621 564H1646"/></g>
<g fill="none" stroke="#dce8f5" stroke-width="5" opacity=".9" stroke-linejoin="round"><rect x="1434.500" y="655.500" width="105" height="85" rx="11"/><path d="M1445 653L1437 620C1431 595 1450 580 1475 580C1495 580 1505 590 1511 605L1520 637C1522 646 1511 648 1509 640L1502 612C1497 597 1488 590 1475 590C1455 590 1443 605 1448 622L1456 653" stroke-width="4.500"/><path d="M1481 703V718A6 6 0 0 0 1493 718V703A13 13 0 1 0 1481 703Z" stroke-width="4.500"/></g>
<path d="M1508.500 600V743M1543.500 650V745" stroke="#5b6670" stroke-width="1.300" fill="none"/>
<use href="#h8" x="849" y="367"/><use href="#h8" x="1040" y="367"/><use href="#h8" x="1232" y="367"/><use href="#h8" x="849" y="447"/><use href="#h8" x="1232" y="447"/><use href="#h8" x="849" y="528"/><use href="#h8" x="1040" y="528"/><use href="#h8" x="1232" y="528"/>
<use href="#h8" x="770" y="305"/><use href="#h8" x="1231" y="305"/><use href="#h8" x="1692" y="305"/><use href="#h8" x="770" y="565"/><use href="#h8" x="1692" y="565"/><use href="#h8" x="770" y="825"/><use href="#h8" x="1231" y="825"/>
<use href="#ht" x="1374" y="547"/><use href="#ht" x="1492" y="547"/><use href="#ht" x="1609" y="547"/><use href="#ht" x="1374" y="665"/><use href="#ht" x="1609" y="665"/><use href="#ht" x="1374" y="783"/><use href="#ht" x="1492" y="783"/><use href="#ht" x="1609" y="783"/>
<use href="#ap" x="1120" y="497" stroke="#e8c4c8" opacity=".6"/><use href="#ap" x="1120" y="497" stroke="#b03232"/><path d="M1128 497H1196" stroke="#b03232" stroke-width="1.500" stroke-dasharray="4 2"/><rect x="1196" y="493" width="8" height="8" fill="none" stroke="#b03232"/>
<use href="#ap" x="1231" y="565" stroke="#e8c4c8"/><circle cx="1231" cy="565" r="3" fill="none" stroke="#b03232"/>
<use href="#ap" x="1491" y="665" stroke="#c8b595"/><path d="M1495 669L1524 703" stroke="#a08f70" stroke-width="1.500" stroke-dasharray="3 3"/><rect x="1523.500" y="703.500" width="8" height="8" fill="none" stroke="#8f8366"/>
<path d="M769 824.500H1000M1532 825.500H1686M1693.500 663V818" stroke="#6e2c2c"/>
<use href="#hp" x="1410" y="540"/><use href="#hp" x="1692" y="540"/><use href="#hp" x="1410" y="824"/>
<path d="M1410 828V1004" stroke="#d75bbd" stroke-width="1.500"/>
<circle cx="1692" cy="823" r="5" fill="#ee6ad0"/><use href="#ap" x="1692" y="823" stroke="#e3a9d4"/>
<path d="M764 269H1696M764 861H1696" stroke="#3fa8a8" stroke-width="1.300"/>
<rect x="1122" y="265" width="7" height="7" fill="#3aa0a6"/><rect x="1122" y="858" width="7" height="7" fill="#3aa0a6"/>
<rect x="1697" y="300" width="5" height="560" fill="#131313"/><path d="M1696.500 71V1029" stroke="#2d8ceb"/>

<!-- comp footer -->
<path d="M764 1008.500H1696" stroke="#151515"/>
<rect x="768" y="1011" width="70" height="17" rx="2" fill="#1b1b1b"/><text x="775" y="1024" class="p" textLength="38">(48,1%)</text><use href="#cd" x="828" y="1019"/>
<path d="M843 1012V1027M1060 1012V1027M1147 1012V1027M1202 1012V1027M1282 1012V1027" stroke="#333"/>
<rect x="848" y="1011" width="87" height="17" rx="2" fill="#1b1b1b"/><text x="857" y="1024" class="p" textLength="20">Half</text><use href="#cd" x="925" y="1019"/>
<rect x="968" y="1011" width="20" height="17" fill="#181818"/><rect x="990" y="1011" width="20" height="17" fill="#181818"/>
<rect x="949" y="1013" width="13" height="12" fill="none" stroke="#aaa"/><path d="M956 1014L953 1020H957L955 1024" stroke="#aaa" fill="none"/>
<rect x="972" y="1013" width="13" height="11" fill="#2d6cb0" stroke="#2d8ceb"/><path d="M972 1018H985M978 1013V1024" stroke="#113"/>
<path d="M994 1014H1006V1024H994Z" fill="none" stroke="#2d8ceb" stroke-width="1.300"/>
<rect x="1015.500" y="1013.500" width="13" height="11" fill="none" stroke="#aaa"/><rect x="1018" y="1016" width="8" height="6" fill="#aaa"/>
<rect x="1037.500" y="1013.500" width="13" height="10" fill="none" stroke="#aaa" stroke-dasharray="3 1"/><path d="M1044 1016V1021M1042 1018.500H1046" stroke="#aaa"/>
<circle cx="1075" cy="1016" r="3" fill="#e52020"/><circle cx="1073" cy="1020" r="3" fill="#20b030"/><circle cx="1078" cy="1020" r="3" fill="#3b6ce0"/>
<circle cx="1098" cy="1019" r="5.500" fill="none" stroke="#b5b5b5" stroke-width="2" stroke-dasharray="4 1"/>
<text x="1111" y="1024" class="b" textLength="21">+0,0</text>
<rect x="1157" y="1015" width="14" height="10" fill="#b5b5b5"/><circle cx="1164" cy="1020" r="2.500" fill="#222"/><circle cx="1185" cy="1020" r="5" fill="#4d4d4d"/>
<rect x="1207" y="1011" width="69" height="17" rx="2" fill="#1b1b1b"/><text x="1216" y="1024" class="d" textLength="51">0:00:01:15</text>

<!-- right panel -->
<rect x="1702" y="69" width="218" height="961" fill="#232323"/>
<g fill="#171717"><rect x="1702" y="97" width="204" height="2"/><rect x="1702" y="127" width="204" height="2"/><rect x="1702" y="157" width="204" height="2"/><rect x="1702" y="187" width="204" height="2"/><rect x="1702" y="217" width="204" height="2"/><rect x="1702" y="247" width="204" height="2"/><rect x="1702" y="277" width="204" height="2"/><rect x="1702" y="307" width="204" height="2"/><rect x="1702" y="337" width="204" height="2"/><rect x="1702" y="367" width="204" height="2"/><rect x="1702" y="397" width="204" height="2"/><rect x="1702" y="427" width="204" height="2"/><rect x="1702" y="457" width="204" height="2"/></g>
<text x="1714" y="88" class="d">Info</text><text x="1714" y="118" class="d" textLength="28">Audio</text><text x="1714" y="148" class="d" textLength="41">Preview</text><text x="1714" y="178" class="d" textLength="82">Effects &amp; Presets</text><text x="1714" y="208" class="d" textLength="42">Libraries</text><text x="1714" y="238" class="d" textLength="48">Character</text><text x="1714" y="268" class="d" textLength="51">Paragraph</text><text x="1714" y="298" class="d" textLength="37">Tracker</text><text x="1714" y="328" class="d" textLength="93">Content-Aware Fill</text><text x="1714" y="358" class="d" textLength="54">Buttcapper</text><text x="1714" y="388" class="l" textLength="58">Bendy Nulls</text><use href="#bu" x="1892" y="384"/><text x="1714" y="418" class="d" textLength="91">AEJuice Export GIF</text><text x="1714" y="448" class="d" textLength="25">Align</text>
</svg>
</body></html>
